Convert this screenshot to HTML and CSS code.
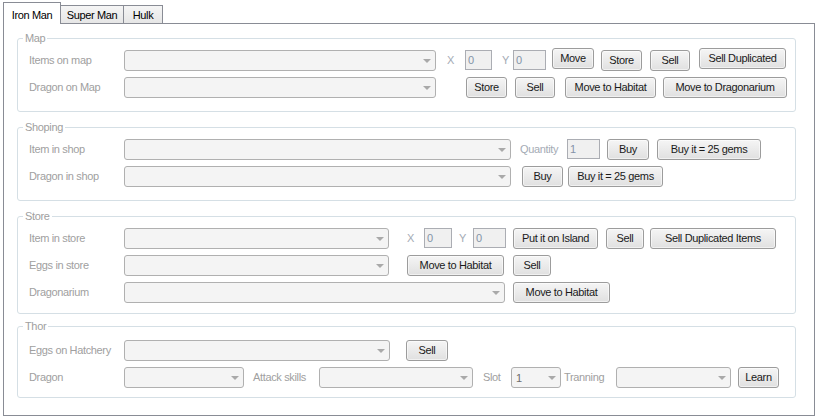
FILE: index.html
```html
<!DOCTYPE html>
<html>
<head>
<meta charset="utf-8">
<title>Iron Man</title>
<link rel="stylesheet" href="styles.css">
</head>
<body>
<div class="tabs">
  <div class="tab active">Iron Man</div>
  <div class="tab inactive w64">Super Man</div>
  <div class="tab inactive w40">Hulk</div>
</div>
<div class="panel">
  <fieldset class="group g-map">
    <legend>Map</legend>
    <div class="row">
      <span class="lbl">Items on map</span>
      <div class="combo w312"></div>
      <span class="ax ml11 w18">X</span>
      <div class="tb w27">0</div>
      <span class="ax ml10 w11">Y</span>
      <div class="tb w33">0</div>
      <button class="btn ml6 w42 up2">Move</button>
      <button class="btn ml7 w41">Store</button>
      <button class="btn ml8 w40">Sell</button>
      <button class="btn ml9 w87 up2">Sell Duplicated</button>
    </div>
    <div class="row">
      <span class="lbl">Dragon on Map</span>
      <div class="combo w312"></div>
      <button class="btn ml30 w41">Store</button>
      <button class="btn ml8 w40">Sell</button>
      <button class="btn ml10 w91">Move to Habitat</button>
      <button class="btn ml7 w124">Move to Dragonarium</button>
    </div>
  </fieldset>

  <fieldset class="group g-shop">
    <legend>Shoping</legend>
    <div class="row">
      <span class="lbl">Item in shop</span>
      <div class="combo w387"></div>
      <span class="ax ml9 w47">Quantity</span>
      <div class="tb w33">1</div>
      <button class="btn ml7 w42">Buy</button>
      <button class="btn ml8 w104">Buy it = 25 gems</button>
    </div>
    <div class="row">
      <span class="lbl">Dragon in shop</span>
      <div class="combo w387"></div>
      <button class="btn ml11 w41">Buy</button>
      <button class="btn ml5 w95">Buy it = 25 gems</button>
    </div>
  </fieldset>

  <fieldset class="group g-store">
    <legend>Store</legend>
    <div class="row">
      <span class="lbl">Item in store</span>
      <div class="combo w265"></div>
      <span class="ax ml18 w17">X</span>
      <div class="tb w28">0</div>
      <span class="ax ml7 w14">Y</span>
      <div class="tb w33">0</div>
      <button class="btn ml7 w85">Put it on Island</button>
      <button class="btn ml8 w38">Sell</button>
      <button class="btn ml6 w126">Sell Duplicated Items</button>
    </div>
    <div class="row">
      <span class="lbl">Eggs in store</span>
      <div class="combo w265"></div>
      <button class="btn ml18 w97">Move to Habitat</button>
      <button class="btn ml9 w38">Sell</button>
    </div>
    <div class="row">
      <span class="lbl">Dragonarium</span>
      <div class="combo w381"></div>
      <button class="btn ml8 w97">Move to Habitat</button>
    </div>
  </fieldset>

  <fieldset class="group g-thor">
    <legend>Thor</legend>
    <div class="row">
      <span class="lbl">Eggs on Hatchery</span>
      <div class="combo w266"></div>
      <button class="btn ml16 w42">Sell</button>
    </div>
    <div class="row">
      <span class="lbl">Dragon</span>
      <div class="combo w120"></div>
      <span class="lbl2 ml9 w66">Attack skills</span>
      <div class="combo w154"></div>
      <span class="lbl2 ml10 w28">Slot</span>
      <div class="combo w50"><span class="val">1</span></div>
      <span class="lbl2 ml3 w52">Tranning</span>
      <div class="combo w115"></div>
      <button class="btn ml7 w41">Learn</button>
    </div>
  </fieldset>
</div>
</body>
</html>
```

FILE: styles.css
```css
* { box-sizing: border-box; }

body {
  margin: 0;
  background: #ffffff;
  font-family: "Liberation Sans", Arial, sans-serif;
  font-size: 11px;
  letter-spacing: -0.35px;
  color: #000;
}

/* ---- tab strip ---- */
.tabs {
  display: flex;
  align-items: flex-end;
  height: 24px;
  padding: 2px 0 0 3px;
}
.tab {
  flex-shrink: 0;
  border: 1px solid #898c95;
  border-bottom: 0;
  text-align: center;
  line-height: 13px;
  white-space: nowrap;
}
.tab.active {
  width: 58px;
  height: 22px;
  padding-top: 6px;
  background: #ffffff;
  position: relative;
  z-index: 1;
}
.tab.inactive {
  height: 18px;
  padding-top: 3px;
  margin-bottom: 1px;
  margin-left: -1px;
  background: linear-gradient(#f5f5f5, #e6e6e6);
}

/* ---- tab page ---- */
.panel {
  margin: -1px 0 0 3px;
  width: 812px;
  height: 393px;
  border: 1px solid #898c95;
  background: #ffffff;
  padding: 8px 0 0 13px;
}

.group {
  width: 779px;
  min-width: 0;
  margin: 0;
  border: 1px solid #d5dfe5;
  border-radius: 3px;
  padding: 5px 0 13px 0;
}
.group legend {
  margin-left: 5px;
  padding: 0 2px;
  line-height: 13px;
  color: #a0a0a0;
}
.g-shop { margin-top: 9px; }
.g-store { margin-top: 9px; padding-bottom: 10px; }
.g-thor { margin-top: 6px; padding-top: 7px; padding-bottom: 9px; }

.row {
  display: flex;
  align-items: flex-start;
  height: 21px;
  padding-left: 11px;
}
.row + .row { margin-top: 6px; }

.lbl {
  flex-shrink: 0;
  width: 95px;
  line-height: 21px;
  color: #a0a0a0;
  white-space: nowrap;
}
.lbl2 {
  flex-shrink: 0;
  line-height: 21px;
  color: #a0a0a0;
  white-space: nowrap;
}
.ax {
  flex-shrink: 0;
  line-height: 21px;
  color: #a4abb5;
  white-space: nowrap;
}

.combo {
  flex-shrink: 0;
  display: flex;
  align-items: center;
  height: 21px;
  border: 1px solid #b0b0b0;
  border-radius: 3px;
  background: #f4f4f4;
  padding: 0 4px 0 4px;
}
.combo .val {
  color: #6d6d6d;
}
.combo::after {
  content: "";
  margin-left: auto;
  margin-top: 1px;
  border-top: 4px solid #a9a9a9;
  border-left: 4px solid transparent;
  border-right: 4px solid transparent;
}

.tb {
  flex-shrink: 0;
  height: 20px;
  border: 1px solid #abadb3;
  background: #f0f0f0;
  padding-left: 2px;
  line-height: 18px;
  color: #8493a8;
}

.btn {
  flex-shrink: 0;
  height: 21px;
  padding: 0;
  border: 1px solid #9c9c9c;
  border-radius: 3px;
  background: linear-gradient(#f5f5f5, #e0e0e0);
  box-shadow: inset 0 0 0 1px rgba(255, 255, 255, 0.55);
  font-family: inherit;
  font-size: 11px;
  letter-spacing: -0.35px;
  line-height: 19px;
  color: #1a1a1a;
  text-align: center;
  white-space: nowrap;
}
.up2 { margin-top: -2px; }

/* spacing */
.ml3 { margin-left: 3px; }
.ml5 { margin-left: 5px; }
.ml6 { margin-left: 6px; }
.ml7 { margin-left: 7px; }
.ml8 { margin-left: 8px; }
.ml9 { margin-left: 9px; }
.ml10 { margin-left: 10px; }
.ml11 { margin-left: 11px; }
.ml16 { margin-left: 16px; }
.ml18 { margin-left: 18px; }
.ml30 { margin-left: 30px; }

/* widths */
.w11 { width: 11px; }
.w14 { width: 14px; }
.w17 { width: 17px; }
.w18 { width: 18px; }
.w27 { width: 27px; }
.w28 { width: 28px; }
.w33 { width: 33px; }
.w38 { width: 38px; }
.w40 { width: 40px; }
.w41 { width: 41px; }
.w42 { width: 42px; }
.w47 { width: 47px; }
.w50 { width: 50px; }
.w52 { width: 52px; }
.w64 { width: 64px; }
.w66 { width: 66px; }
.w85 { width: 85px; }
.w87 { width: 87px; }
.w91 { width: 91px; }
.w95 { width: 95px; }
.w97 { width: 97px; }
.w104 { width: 104px; }
.w115 { width: 115px; }
.w120 { width: 120px; }
.w124 { width: 124px; }
.w126 { width: 126px; }
.w154 { width: 154px; }
.w265 { width: 265px; }
.w266 { width: 266px; }
.w312 { width: 312px; }
.w381 { width: 381px; }
.w387 { width: 387px; }
```
